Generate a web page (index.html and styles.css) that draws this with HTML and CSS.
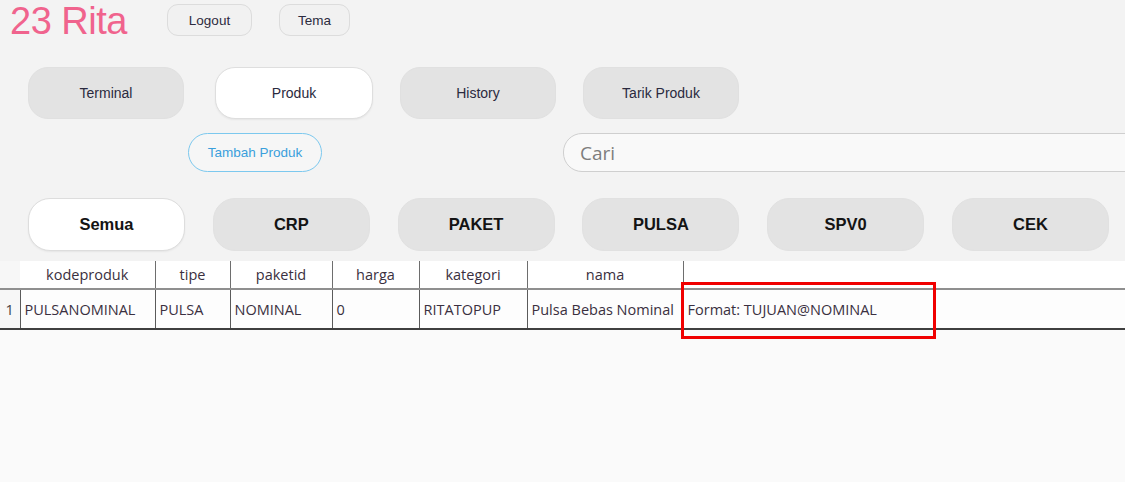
FILE: index.html
```html
<!DOCTYPE html>
<html lang="id">
<head>
<meta charset="utf-8">
<title>23 Rita</title>
<link rel="stylesheet" href="styles.css">
</head>
<body>
<div class="page">
  <header class="topbar">
    <h1 class="brand">23 Rita</h1>
    <button class="small-btn logout">Logout</button>
    <button class="small-btn tema">Tema</button>
  </header>

  <nav class="tabs">
    <button class="tab">Terminal</button>
    <button class="tab active">Produk</button>
    <button class="tab">History</button>
    <button class="tab">Tarik Produk</button>
  </nav>

  <div class="toolbar">
    <button class="add-btn">Tambah Produk</button>
    <div class="search"><span class="placeholder">Cari</span></div>
  </div>

  <div class="cats">
    <button class="cat active">Semua</button>
    <button class="cat">CRP</button>
    <button class="cat">PAKET</button>
    <button class="cat">PULSA</button>
    <button class="cat">SPV0</button>
    <button class="cat">CEK</button>
  </div>

  <div class="table-area">
    <table class="grid">
      <colgroup>
        <col class="c-num"><col class="c-kode"><col class="c-tipe"><col class="c-paket"><col class="c-harga"><col class="c-kat"><col class="c-nama"><col class="c-rest">
      </colgroup>
      <thead>
        <tr>
          <th class="num"></th>
          <th>kodeproduk</th>
          <th>tipe</th>
          <th>paketid</th>
          <th>harga</th>
          <th>kategori</th>
          <th>nama</th>
          <th class="last"></th>
        </tr>
      </thead>
      <tbody>
        <tr>
          <td class="num">1</td>
          <td>PULSANOMINAL</td>
          <td>PULSA</td>
          <td>NOMINAL</td>
          <td>0</td>
          <td>RITATOPUP</td>
          <td>Pulsa Bebas Nominal</td>
          <td class="last">Format: TUJUAN@NOMINAL</td>
        </tr>
      </tbody>
    </table>
    <div class="highlight"></div>
  </div>
</div>
</body>
</html>
```

FILE: styles.css
```css
* { box-sizing: border-box; }

html, body {
  margin: 0;
  padding: 0;
}

body {
  width: 1125px;
  height: 482px;
  overflow: hidden;
  background: #f3f3f3;
  font-family: "Liberation Sans", Arial, sans-serif;
}

.page {
  display: flex;
  flex-direction: column;
  height: 482px;
}

button {
  font-family: "Liberation Sans", Arial, sans-serif;
  cursor: pointer;
}

/* ---------- top bar ---------- */
.topbar {
  display: flex;
  align-items: flex-start;
  height: 40px;
  padding: 0 0 0 10px;
}

.brand {
  margin: 0;
  width: 157px;
  font-family: "Liberation Sans", Arial, sans-serif;
  font-weight: 400;
  font-size: 38px;
  line-height: normal;
  letter-spacing: -0.5px;
  color: #f0638d;
}

.small-btn {
  margin-top: 4px;
  height: 32px;
  border: 1px solid #dcdcdc;
  border-radius: 11px;
  background: #f1f1f1;
  color: #2c2c40;
  font-size: 13.5px;
  padding: 0;
}

.logout { width: 85px; }
.tema { width: 71px; margin-left: 27px; }

/* ---------- main tabs ---------- */
.tabs {
  display: flex;
  gap: 27px;
  margin-top: 27px;
  padding-left: 28px;
}

.tab {
  width: 156px;
  height: 52px;
  border: 1px solid #e0e0e0;
  border-radius: 20px;
  background: #e3e3e3;
  color: #2a2a3e;
  font-size: 14px;
  padding: 0;
}

.tab.active {
  width: 158px;
  margin-left: 4px;
  background: #ffffff;
  border-color: #dedede;
  box-shadow: 0 1px 2px rgba(0,0,0,0.06);
}

/* ---------- toolbar ---------- */
.toolbar {
  display: flex;
  align-items: center;
  margin-top: 14px;
  height: 39px;
}

.add-btn {
  margin-left: 188px;
  width: 134px;
  height: 39px;
  border: 1.5px solid #7cc8ee;
  border-radius: 20px;
  background: #f6f6f6;
  color: #3a9fdc;
  font-size: 13.5px;
  padding: 0;
}

.search {
  margin-left: 241px;
  flex: 1;
  margin-right: -40px;
  height: 39px;
  border: 1px solid #cfcfcf;
  border-radius: 19px;
  background: #f9f9f9;
  display: flex;
  align-items: center;
  padding-left: 16px;
}

.placeholder {
  font-family: "Open Sans", "Noto Sans", sans-serif;
  font-size: 19px;
  color: #7d7d7d;
}

/* ---------- categories ---------- */
.cats {
  display: flex;
  gap: 27.8px;
  margin-top: 26px;
  padding-left: 28px;
}

.cat {
  width: 157px;
  height: 53px;
  border: 1px solid #e1e1e1;
  border-radius: 22px;
  background: #e3e3e3;
  color: #141414;
  font-weight: 700;
  font-size: 16.5px;
  padding: 0;
}

.cat.active {
  background: #ffffff;
  border-color: #dddddd;
  box-shadow: 0 1px 2px rgba(0,0,0,0.06);
}

/* ---------- table ---------- */
.table-area {
  position: relative;
  margin-top: 10px;
  flex: 1;
  background: #fafafa;
}

.grid {
  width: 1125px;
  border-collapse: collapse;
  table-layout: fixed;
  font-family: "Open Sans", "Noto Sans", sans-serif;
  font-size: 14.5px;
  color: #3a3040;
}

.c-num { width: 20px; }
.c-kode { width: 135px; }
.c-tipe { width: 75px; }
.c-paket { width: 102px; }
.c-harga { width: 87px; }
.c-kat { width: 108px; }
.c-nama { width: 156px; }
.c-rest { width: auto; }

.grid thead tr {
  height: 28px;
  background: #ffffff;
}

.grid th {
  font-weight: 400;
  text-align: center;
  padding: 0;
  border-right: 1.5px solid #6e6e6e;
  white-space: nowrap;
}

.grid th.num { border-right: none; background: #f7f7f7; }
.grid th.last { border-right: none; }

.grid tbody tr {
  height: 40px;
  background: #fdfdfd;
  border-top: 2px solid #8f8f8f;
  border-bottom: 2px solid #3f3f3f;
}

.grid td {
  padding: 0 0 0 4px;
  text-align: left;
  border-right: 1.5px solid #5a5a5a;
  white-space: nowrap;
  overflow: hidden;
}

.grid td.num {
  padding: 0;
  text-align: center;
  background: #f7f7f7;
  color: #444;
}

.grid td.last { border-right: none; }

.highlight {
  position: absolute;
  left: 681px;
  top: 21px;
  width: 255px;
  height: 57px;
  border: 3px solid #f00000;
  pointer-events: none;
}
```
